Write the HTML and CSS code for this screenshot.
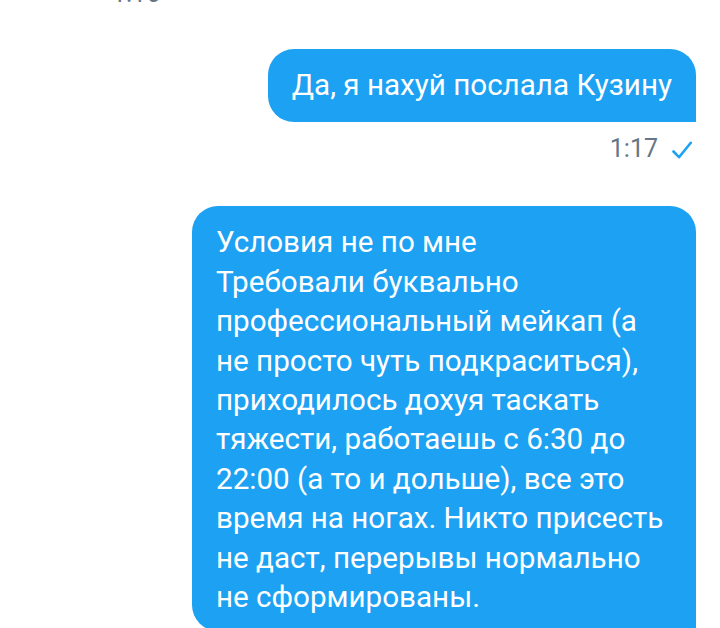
FILE: index.html
```html
<!DOCTYPE html>
<html lang="ru">
<head>
    <meta charset="UTF-8">
    <meta name="viewport" content="width=device-width, initial-scale=1.0">
    <title>Чат</title>
    <link rel="stylesheet" href="styles.css">
</head>
<body>
    <div class="chat">
        <div class="time time-in">1:16</div>

        <div class="bubble bubble-short">Да, я нахуй послала Кузину</div>
        <div class="time time-out">
            <span>1:17</span>
            <svg class="check" width="20" height="18" viewBox="0 0 20 18">
                <path d="M1.5 10.5 L7 16.2 L18.8 1.8" fill="none" stroke="#1da1f2" stroke-width="2.6" stroke-linecap="round" stroke-linejoin="round"/>
            </svg>
        </div>

        <div class="bubble bubble-long">
            Условия не по мне<br>
            Требовали буквально<br>
            профессиональный мейкап (а<br>
            не просто чуть подкраситься),<br>
            приходилось дохуя таскать<br>
            тяжести, работаешь с 6:30 до<br>
            22:00 (а то и дольше), все это<br>
            время на ногах. Никто присесть<br>
            не даст, перерывы нормально<br>
            не сформированы.
        </div>
    </div>
</body>
</html>
```

FILE: styles.css
```css
html, body {
    margin: 0;
    background: #fff;
}
body {
    font-family: Roboto, "Noto Sans", sans-serif;
    overflow: hidden;
}
.chat {
    display: flex;
    flex-direction: column;
    align-items: flex-end;
    padding: 0 24px 0 0;
}
.time {
    font-size: 25px;
    line-height: 30px;
    color: #657786;
}
.time-in {
    align-self: flex-start;
    margin: -21px 0 0 112px;
}
.time-out {
    display: flex;
    align-items: center;
    gap: 14px;
    margin: 12px 4px 0 0;
}
.check {
    display: block;
    margin-top: 1px;
}
.bubble {
    background: #1da1f2;
    color: #fff;
    font-size: 29.6px;
    line-height: 39.4px;
    border-radius: 26px 26px 0 26px;
    box-sizing: border-box;
}
.bubble-short {
    margin-top: 40px;
    padding: 17px 24px;
    white-space: nowrap;
}
.bubble-long {
    margin-top: 42px;
    padding: 17px 24px 14px 24px;
    width: 504px;
}
```
